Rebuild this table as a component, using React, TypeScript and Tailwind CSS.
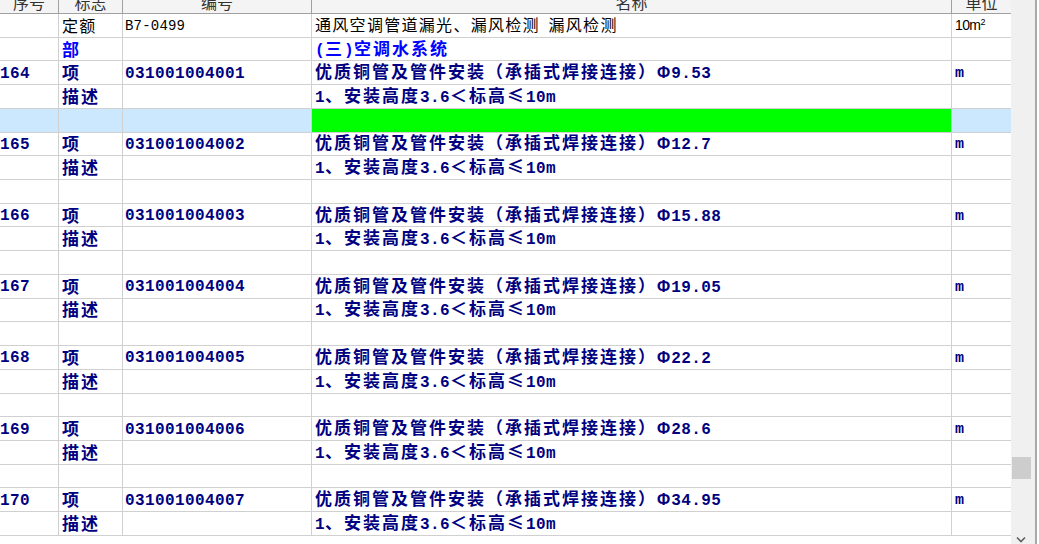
import React from 'react';

type Kind = 'quota' | 'part' | 'item' | 'desc' | 'blank' | 'sel';

interface Row {
  kind: Kind;
  no?: string;
  flag?: string;
  code?: string;
  name?: string;
  unit?: string;
}

const DESC = '1、安装高度3.6＜标高≤10m';

const pipes: [string, string, string][] = [
  ['164', '031001004001', '9.53'],
  ['165', '031001004002', '12.7'],
  ['166', '031001004003', '15.88'],
  ['167', '031001004004', '19.05'],
  ['168', '031001004005', '22.2'],
  ['169', '031001004006', '28.6'],
  ['170', '031001004007', '34.95'],
];

// build the visible rows: quota line, part header, then item / desc / spacer groups
const rows: Row[] = [
  { kind: 'quota', flag: '定额', code: 'B7-0499', name: '通风空调管道漏光、漏风检测 漏风检测', unit: '10m²' },
  { kind: 'part', flag: '部', name: '(三)空调水系统' },
];
pipes.forEach(([no, code, d], i) => {
  rows.push({ kind: 'item', no, flag: '项', code, name: `优质铜管及管件安装（承插式焊接连接）Φ${d}`, unit: 'm' });
  rows.push({ kind: 'desc', flag: '描述', name: DESC });
  if (i === 0) rows.push({ kind: 'sel' });
  else if (i < pipes.length - 1) rows.push({ kind: 'blank' });
});

const CJK = /[\u3000-\u303f\u4e00-\u9fff\uff00-\uffef\u2264]/;
const SPLIT = /([\u3000-\u303f\u4e00-\u9fff\uff00-\uffef\u2264]+|Φ)/;

function Txt({ s, bold }: { s: string; bold?: boolean }) {
  const parts = s.split(SPLIT).filter(Boolean);
  return (
    <span className="whitespace-pre">
      {parts.map((p, i) => {
        if (CJK.test(p)) {
          return bold ? (
            <span key={i} className="font-['Noto_Sans_CJK_SC',sans-serif] font-bold text-[17px] tracking-[2px]">{p}</span>
          ) : (
            <span key={i} className="font-['Noto_Sans_CJK_SC',sans-serif] text-[16px] tracking-[1.3px]">{p}</span>
          );
        }
        if (p === 'Φ') {
          return (
            <span key={i} className="font-['Liberation_Sans',sans-serif] font-bold text-[16px] pr-[1px]">Φ</span>
          );
        }
        return bold ? (
          <span key={i} className="font-['Liberation_Mono',monospace] font-bold text-[16px] tracking-[0.4px]">{p}</span>
        ) : (
          <span key={i} className="font-['Liberation_Mono',monospace] text-[14px] tracking-[0.2px]">{p}</span>
        );
      })}
    </span>
  );
}

const cell = 'flex items-center overflow-hidden whitespace-nowrap border-b border-[#d0d0d0] leading-[20px]';

function BodyRow({ r }: { r: Row }) {
  const bold = r.kind !== 'quota';
  const color = r.kind === 'quota' ? 'text-black' : r.kind === 'part' ? 'text-[#0000ff]' : 'text-[#000080]';
  const sel = r.kind === 'sel';
  const bg = sel ? 'bg-[#cce8ff]' : 'bg-white';
  return (
    <div className={`grid grid-cols-[59px_64px_189px_640px_59px] h-[23.73px] ${color}`}>
      <div className={`${cell} ${bg} border-r pl-0`}>{r.no && <Txt s={r.no} bold />}</div>
      <div className={`${cell} ${bg} border-r pl-[3px]`}>{r.flag && <Txt s={r.flag} bold={bold} />}</div>
      <div className={`${cell} ${bg} border-r pl-[2px]`}>{r.code && <Txt s={r.code} bold={bold} />}</div>
      <div className={`${cell} ${sel ? 'bg-[#00ff00]' : 'bg-white'} border-r pl-[3px]`}>
        {r.name && <Txt s={r.name} bold={bold} />}
      </div>
      <div className={`${cell} ${bg} pl-[3px]`}>
        {r.unit === '10m²' && (
          <span className="font-['Liberation_Sans',sans-serif] text-[14px] tracking-[-0.6px]">
            10m<sup className="text-[9px] -top-[5px]">2</sup>
          </span>
        )}
        {r.unit === 'm' && (
          <span className="font-['Liberation_Mono',monospace] font-black text-[15px] pt-[3px]">m</span>
        )}
      </div>
    </div>
  );
}

const headCell =
  'flex justify-center items-center border-r border-b border-[#a0a0a0] bg-[#f4f4f4] text-[#333] font-[\'Noto_Sans_CJK_SC\',sans-serif] text-[16px] leading-[20px]';

export default function App() {
  return (
    <div className="w-[1039px] h-[544px] overflow-hidden bg-white flex">
      <div className="w-[1011px] flex flex-col">
        <div className="grid grid-cols-[59px_64px_189px_640px_59px] h-[24px] -mt-[10px] shrink-0">
          <div className={headCell}>序号</div>
          <div className={headCell}>标志</div>
          <div className={headCell}>编号</div>
          <div className={headCell}>名称</div>
          <div className={`${headCell} border-r-0`}>单位</div>
        </div>
        {rows.map((r, i) => (
          <BodyRow key={i} r={r} />
        ))}
      </div>
      {/* vertical scrollbar */}
      <div className="w-[24px] bg-[#f0f0f0] flex flex-col items-center">
        <div className="h-[457px] shrink-0" />
        <div className="w-[19px] h-[22px] bg-[#cdcdcd] -ml-[4px]" />
        <div className="flex-1" />
        <svg width="10" height="7" viewBox="0 0 10 7" className="mb-[1px] -ml-[5px]">
          <path d="M1 1.5 L5 5.5 L9 1.5" fill="none" stroke="#606060" strokeWidth="1.6" />
        </svg>
      </div>
      <div className="w-[2px] bg-[#a8a8a8]" />
      <div className="flex-1 bg-white" />
    </div>
  );
}
